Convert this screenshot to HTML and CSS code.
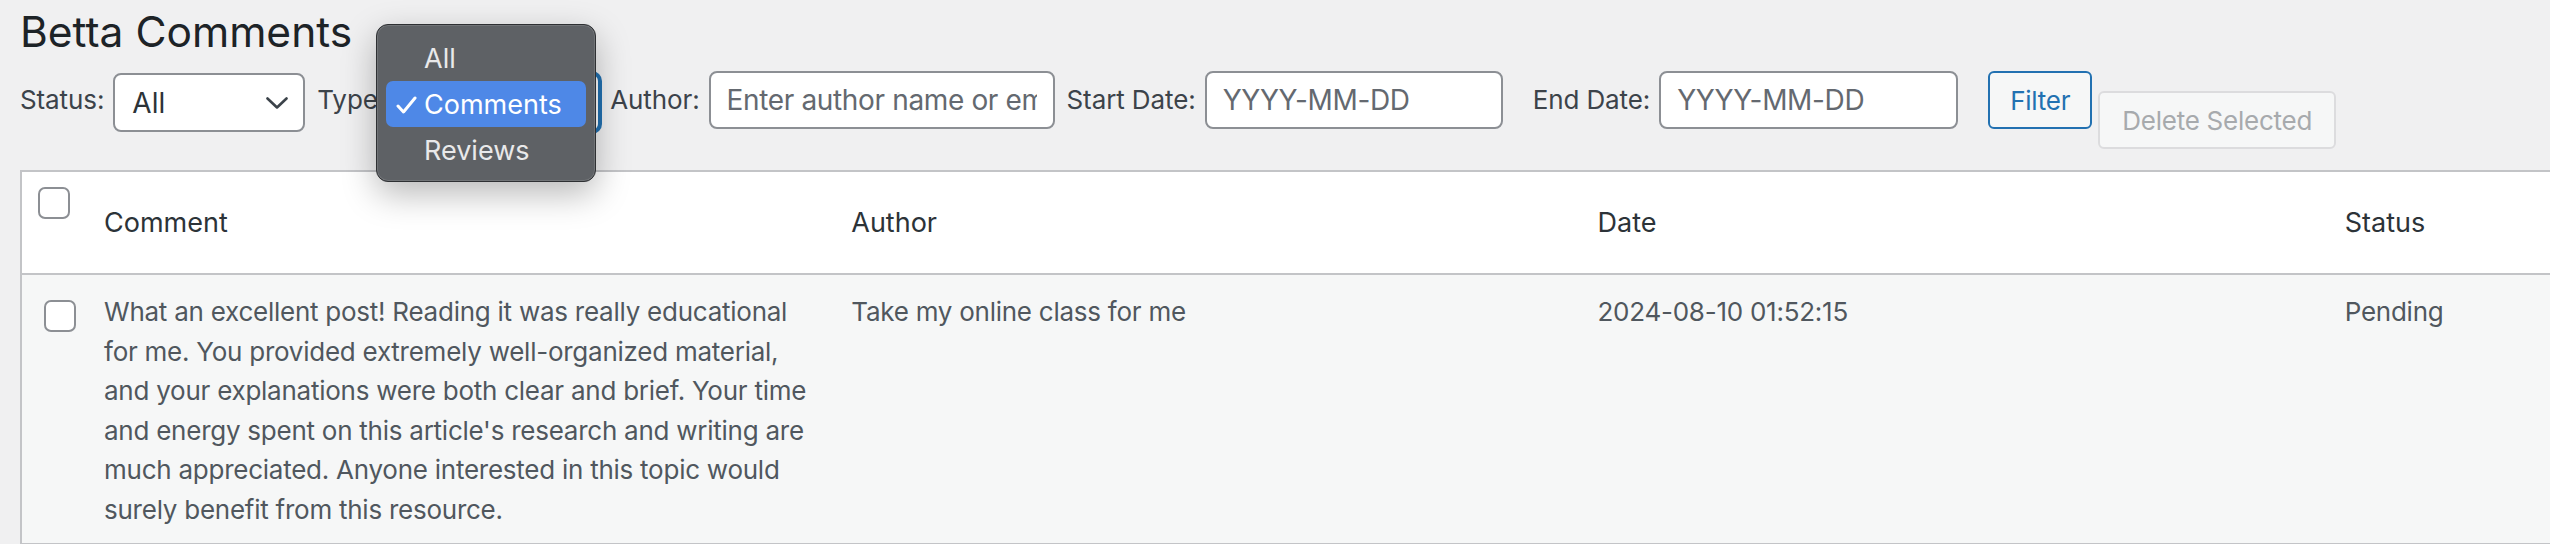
FILE: index.html
```html
<!DOCTYPE html>
<html lang="en">
<head>
<meta charset="utf-8">
<title>Betta Comments</title>
<link rel="stylesheet" href="styles.css">
</head>
<body>
<div class="wrap">
  <h1 class="page-title">Betta Comments</h1>

  <div class="filters">
    <label class="flabel">Status:</label>
    <div class="select select-status">
      <span>All</span>
      <svg class="chev" width="22" height="12" viewBox="0 0 22 12"><path d="M1.5 1.5 L11 10.5 L20.5 1.5"/></svg>
    </div>

    <label class="flabel">Type:</label>
    <div class="select select-type is-focus">
      <span>Comments</span>
      <svg class="chev" width="22" height="12" viewBox="0 0 22 12"><path d="M1.5 1.5 L11 10.5 L20.5 1.5"/></svg>
    </div>

    <label class="flabel lab-author">Author:</label>
    <input class="field field-author" type="text" placeholder="Enter author name or email">

    <label class="flabel lab-start">Start Date:</label>
    <input class="field field-start" type="text" placeholder="YYYY-MM-DD">

    <label class="flabel lab-end">End Date:</label>
    <input class="field field-end" type="text" placeholder="YYYY-MM-DD">

    <button class="btn btn-filter" type="button">Filter</button>
    <button class="btn btn-delete" type="button" disabled>Delete Selected</button>
  </div>

  <div class="menu">
    <div class="menu-item">All</div>
    <div class="menu-item is-active">
      <svg class="tick" width="21" height="18" viewBox="0 0 21 18"><path d="M2 10 L7.5 16 L19 2"/></svg>
      Comments
    </div>
    <div class="menu-item">Reviews</div>
  </div>

  <table class="list">
    <colgroup>
      <col class="c-check">
      <col class="c-col">
      <col class="c-col c-author">
      <col class="c-col">
      <col class="c-col">
    </colgroup>
    <thead>
      <tr>
        <th class="check"><span class="cb"></span></th>
        <th>Comment</th>
        <th>Author</th>
        <th>Date</th>
        <th>Status</th>
      </tr>
    </thead>
    <tbody>
      <tr>
        <td class="check"><span class="cb"></span></td>
        <td>What an excellent post! Reading it was really educational for me. You provided extremely well-organized material, and your explanations were both clear and brief. Your time and energy spent on this article's research and writing are much appreciated. Anyone interested in this topic would surely benefit from this resource.</td>
        <td>Take my online class for me</td>
        <td>2024-08-10 01:52:15</td>
        <td>Pending</td>
      </tr>
    </tbody>
  </table>
</div>
</body>
</html>
```

FILE: styles.css
```css
html, body {
  margin: 0;
  padding: 0;
  background: #f0f0f1;
  overflow: hidden;
}

body {
  font-family: Inter, "Noto Sans", sans-serif;
  color: #3c434a;
}

.wrap {
  position: relative;
  padding: 5px 0 0 20px;
}

.page-title {
  margin: 0 0 12px;
  font-size: 42.5px;
  line-height: 54px;
  font-weight: 400;
  color: #1d2327;
}

.filters {
  display: flex;
  align-items: flex-start;
  height: 78px;
}

.flabel {
  font-size: 26px;
  line-height: 58px;
  letter-spacing: -0.1px;
  color: #3c434a;
  margin-right: 9px;
}

.select {
  box-sizing: border-box;
  height: 59px;
  margin-top: 2px;
  border: 2px solid #8c8f94;
  border-radius: 8px;
  background: #fff;
  display: flex;
  align-items: center;
  justify-content: space-between;
  padding: 0 15px 0 17px;
  font-size: 28px;
  color: #2c3338;
  margin-right: 12px;
}

.select-status { width: 192px; }
.select-type { width: 206px; margin-right: 10px; }

.select.is-focus {
  border-color: #2271b1;
  box-shadow: 0 0 0 2px #2271b1;
}

.chev path {
  fill: none;
  stroke: #3c434a;
  stroke-width: 2.6;
  stroke-linecap: round;
  stroke-linejoin: round;
}

.field {
  box-sizing: border-box;
  height: 58px;
  border: 2px solid #8c8f94;
  border-radius: 8px;
  background: #fff;
  padding: 0 16px;
  font-family: Inter, "Noto Sans", sans-serif;
  font-size: 28px;
  letter-spacing: -0.35px;
  color: #2c3338;
  margin: 0 12px 0 0;
  outline: none;
}

.field::placeholder { color: #646970; opacity: 1; }

.field-author { width: 346px; }
.field-start { width: 298px; margin-right: 30px; }
.field-end { width: 299px; margin-right: 30px; }

.btn {
  box-sizing: border-box;
  height: 58px;
  padding: 0 20px;
  border-radius: 6px;
  background: #f6f7f7;
  font-family: Inter, "Noto Sans", sans-serif;
  font-size: 26px;
  letter-spacing: -0.25px;
  cursor: pointer;
}

.btn-filter {
  border: 2px solid #2271b1;
  color: #2271b1;
  margin-right: 6px;
}

.btn-delete {
  margin-top: 20px;
  padding: 0 22px;
  border: 2px solid #dcdcde;
  color: #a7aaad;
}

/* open dropdown of the Type select */
.menu {
  position: absolute;
  left: 376px;
  top: 24px;
  box-sizing: border-box;
  width: 220px;
  height: 158px;
  padding: 10px 9px 8px;
  background: #5e6165;
  border: 1.5px solid #2e3033;
  border-radius: 12px;
  box-shadow: inset 0 0 0 1px rgba(255, 255, 255, 0.12), 0 12px 34px rgba(0, 0, 0, 0.28);
  z-index: 5;
}

.menu-item {
  position: relative;
  height: 46px;
  line-height: 48px;
  padding-left: 38px;
  font-size: 27px;
  color: #e9e9ea;
  border-radius: 7px;
}

.menu-item.is-active {
  background: #4e88e7;
  color: #fff;
}

.tick {
  position: absolute;
  left: 10px;
  top: 15px;
}

.tick path {
  fill: none;
  stroke: #fff;
  stroke-width: 3;
  stroke-linecap: round;
  stroke-linejoin: round;
}

/* table */
.list {
  margin-top: 21px;
  table-layout: fixed;
  width: 3054px;
  border-collapse: separate;
  border-spacing: 0;
  border: 2px solid #c3c4c7;
  background: #fff;
}

.c-check { width: 62px; }
.c-col { width: 747px; }
.c-col.c-author { width: 746px; }

.list th {
  height: 103px;
  padding: 0 20px;
  box-sizing: border-box;
  vertical-align: middle;
  text-align: left;
  font-weight: 400;
  font-size: 27px;
  line-height: 40px;
  color: #2c3338;
  border-bottom: 2px solid #c3c4c7;
}

.list td {
  padding: 17px 14px 14px 20px;
  vertical-align: top;
  font-size: 26px;
  line-height: 39.5px;
  letter-spacing: -0.25px;
  color: #50575e;
  background: #f6f7f7;
}

.list th.check {
  vertical-align: top;
  padding: 15px 0 0 16px;
}

.list td.check {
  padding: 25px 0 0 22px;
}

.cb {
  display: block;
  box-sizing: border-box;
  width: 32px;
  height: 32px;
  border: 2px solid #8c8f94;
  border-radius: 7px;
  background: #fff;
}
```
